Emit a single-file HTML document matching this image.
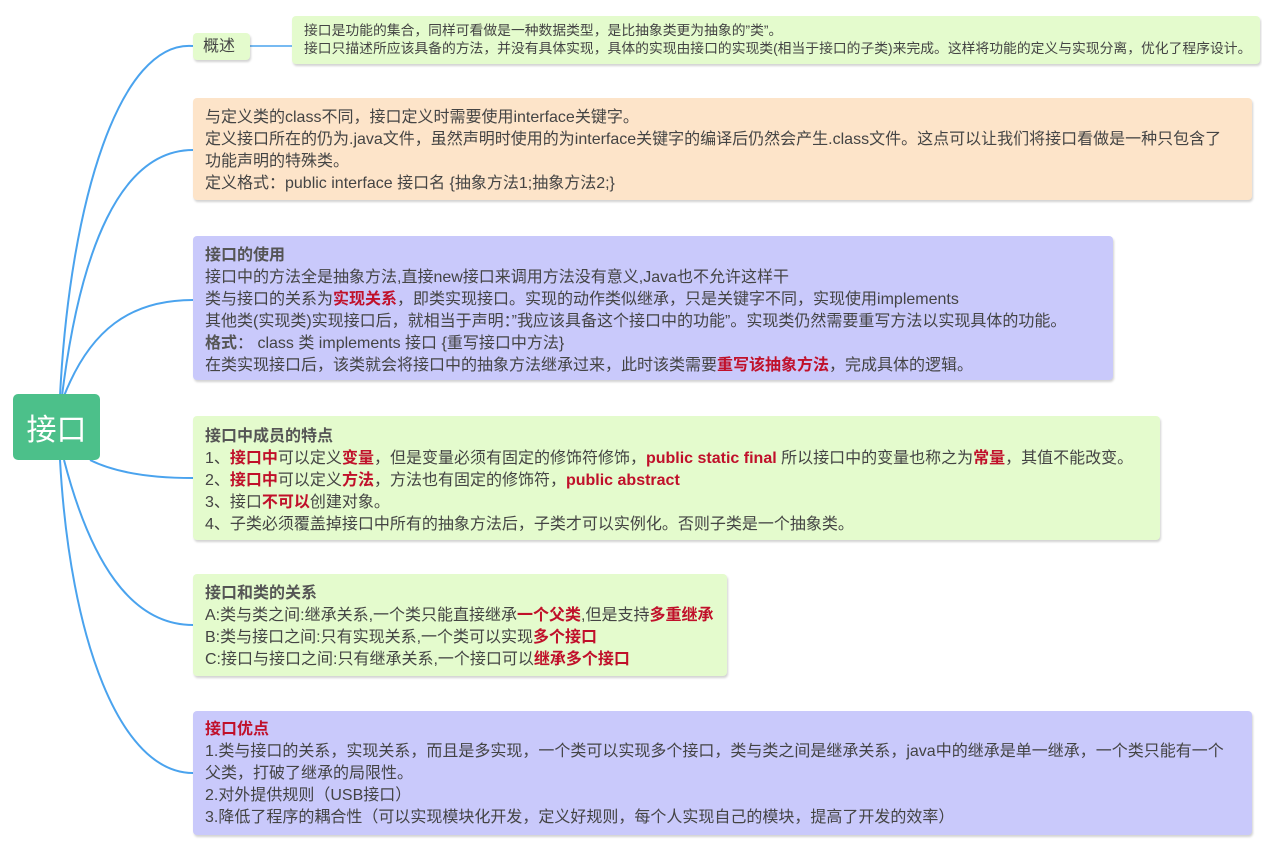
<!DOCTYPE html>
<html><head><meta charset="utf-8"><style>
body{margin:0;width:1262px;height:843px;background:#fff;position:relative;overflow:hidden;font-family:"Liberation Sans","Noto Sans CJK SC",sans-serif;color:#444}
.b{position:absolute;border-radius:4px;box-shadow:1px 2px 2px rgba(0,0,0,.18);box-sizing:border-box;font-size:16px;line-height:22px;padding:5px 12px;white-space:nowrap}
.g{background:#e4fbcd}.o{background:#fde4c9}.p{background:#c9c9fb}
b{color:#555}.r{color:#c0102a;font-weight:bold}
</style></head><body>
<svg width="1262" height="843" style="position:absolute;left:0;top:0" fill="none" stroke="#4aa3ee" stroke-width="2">
<path d="M60 396 C70 200 120 40 193 46"/>
<path d="M62 396 C80 250 120 150 193 150"/>
<path d="M64 396 C90 330 130 300 193 300"/>
<path d="M90 460 C110 470 140 478 193 478"/>
<path d="M64 460 C90 560 130 625 193 625"/>
<path d="M60 460 C70 640 120 773 193 773"/>
<path d="M250 46 L292 46" stroke-width="1.5"/>
</svg>
<div style="position:absolute;left:13px;top:394px;width:87px;height:66px;background:#4cc08a;border-radius:5px;color:#fff;font-size:30px;line-height:66px;text-align:center;font-family:'Noto Sans CJK SC',sans-serif">接口</div>
<div class="b g" style="left:193px;top:33px;width:57px;height:27px;padding:2px 10px;font-size:16px;line-height:23px">概述</div>
<div class="b g" style="left:292px;top:16px;width:968px;height:48px;font-size:13.8px;line-height:18px;padding:6px 12px">接口是功能的集合，同样可看做是一种数据类型，是比抽象类更为抽象的”类”。<br>接口只描述所应该具备的方法，并没有具体实现，具体的实现由接口的实现类(相当于接口的子类)来完成。这样将功能的定义与实现分离，优化了程序设计。</div>
<div class="b o" style="left:193px;top:98px;width:1059px;height:102px;padding:9px 12px 0">与定义类的class不同，接口定义时需要使用interface关键字。<br>定义接口所在的仍为.java文件，虽然声明时使用的为interface关键字的编译后仍然会产生.class文件。这点可以让我们将接口看做是一种只包含了<br>功能声明的特殊类。<br>定义格式：public interface 接口名 {抽象方法1;抽象方法2;}</div>
<div class="b p" style="left:193px;top:236px;width:920px;height:144px;padding:9px 12px 0"><b>接口的使用</b><br>接口中的方法全是抽象方法,直接new接口来调用方法没有意义,Java也不允许这样干<br>类与接口的关系为<span class="r">实现关系</span>，即类实现接口。实现的动作类似继承，只是关键字不同，实现使用implements<br>其他类(实现类)实现接口后，就相当于声明：”我应该具备这个接口中的功能”。实现类仍然需要重写方法以实现具体的功能。<br><b>格式</b>： class 类 implements 接口 {重写接口中方法}<br>在类实现接口后，该类就会将接口中的抽象方法继承过来，此时该类需要<span class="r">重写该抽象方法</span>，完成具体的逻辑。</div>
<div class="b g" style="left:193px;top:416px;width:967px;height:124px;padding:10px 12px 0"><b>接口中成员的特点</b><br>1、<span class="r">接口中</span>可以定义<span class="r">变量</span>，但是变量必须有固定的修饰符修饰，<span class="r">public static final</span> 所以接口中的变量也称之为<span class="r">常量</span>，其值不能改变。<br>2、<span class="r">接口中</span>可以定义<span class="r">方法</span>，方法也有固定的修饰符，<span class="r">public abstract</span><br>3、接口<span class="r">不可以</span>创建对象。<br>4、子类必须覆盖掉接口中所有的抽象方法后，子类才可以实例化。否则子类是一个抽象类。</div>
<div class="b g" style="left:193px;top:574px;width:534px;height:102px;padding:9px 12px 0"><b>接口和类的关系</b><br>A:类与类之间:继承关系,一个类只能直接继承<span class="r">一个父类</span>,但是支持<span class="r">多重继承</span><br>B:类与接口之间:只有实现关系,一个类可以实现<span class="r">多个接口</span><br>C:接口与接口之间:只有继承关系,一个接口可以<span class="r">继承多个接口</span></div>
<div class="b p" style="left:193px;top:711px;width:1059px;height:124px;padding:8px 12px 0"><span class="r">接口优点</span><br>1.类与接口的关系，实现关系，而且是多实现，一个类可以实现多个接口，类与类之间是继承关系，java中的继承是单一继承，一个类只能有一个<br>父类，打破了继承的局限性。<br>2.对外提供规则（USB接口）<br>3.降低了程序的耦合性（可以实现模块化开发，定义好规则，每个人实现自己的模块，提高了开发的效率）</div>
</body></html>
